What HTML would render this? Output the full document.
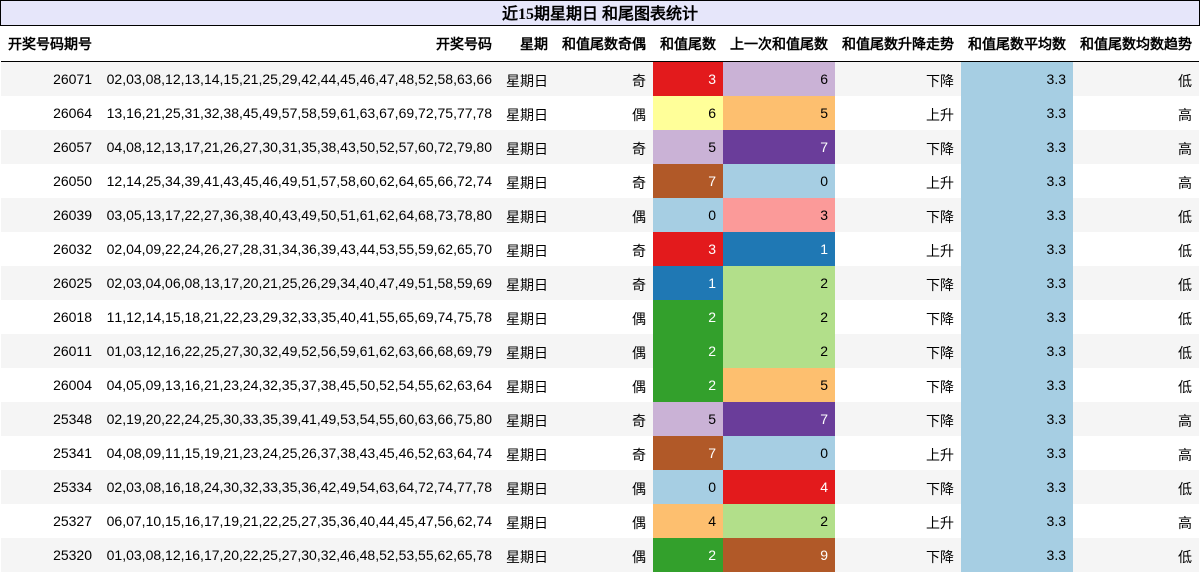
<!DOCTYPE html>
<html lang="zh"><head><meta charset="utf-8">
<style>
html,body{margin:0;padding:0;background:#fff;width:1200px;height:573px;overflow:hidden}
#t{position:absolute;left:0;top:0;width:1200px;height:26px;box-sizing:border-box;border:1px solid #000;background:#e6e6fa;text-align:center;font:bold 16px/28px "Liberation Serif","WenQuanYi Zen Hei",serif;color:#000}
table{position:absolute;left:1px;top:26px;width:1198px;table-layout:fixed;border-collapse:collapse;font:14px "Liberation Sans","WenQuanYi Zen Hei",sans-serif;color:#000;font-kerning:none}
th,td{padding:0 7px 0 0;text-align:right;white-space:nowrap;overflow:visible}
thead th{height:35px;border-bottom:1px solid #000;font-weight:bold}
tbody td{height:34px;box-sizing:border-box}
tbody td:nth-child(3),tbody td:nth-child(4),tbody td:nth-child(7),tbody td:nth-child(9){padding-top:4px}
tbody tr:nth-child(odd){background:#f5f5f5}
.m{background:#a6cee3}
.w{color:#fff}
.a{background:#a6cee3}.b{background:#1f78b4}.c{background:#33a02c}.d{background:#e31a1c}.e{background:#fdbf6f}.f{background:#cab2d6}.g{background:#ffff99}.h{background:#b15928}.i{background:#b2df8a}.j{background:#fb9a99}.k{background:#6a3d9a}
</style></head><body>
<div id="t">近15期星期日 和尾图表统计</div>
<table>
<colgroup><col style="width:98px"><col style="width:400px"><col style="width:56px"><col style="width:98px"><col style="width:70px"><col style="width:112px"><col style="width:126px"><col style="width:112px"><col style="width:126px"></colgroup>
<thead><tr><th>开奖号码期号</th><th>开奖号码</th><th>星期</th><th>和值尾数奇偶</th><th>和值尾数</th><th>上一次和值尾数</th><th>和值尾数升降走势</th><th>和值尾数平均数</th><th>和值尾数均数趋势</th></tr></thead>
<tbody>
<tr><td>26071</td><td>02,03,08,12,13,14,15,21,25,29,42,44,45,46,47,48,52,58,63,66</td><td>星期日</td><td>奇</td><td class="d w">3</td><td class="f">6</td><td>下降</td><td class="m">3.3</td><td>低</td></tr>
<tr><td>26064</td><td>13,16,21,25,31,32,38,45,49,57,58,59,61,63,67,69,72,75,77,78</td><td>星期日</td><td>偶</td><td class="g">6</td><td class="e">5</td><td>上升</td><td class="m">3.3</td><td>高</td></tr>
<tr><td>26057</td><td>04,08,12,13,17,21,26,27,30,31,35,38,43,50,52,57,60,72,79,80</td><td>星期日</td><td>奇</td><td class="f">5</td><td class="k w">7</td><td>下降</td><td class="m">3.3</td><td>高</td></tr>
<tr><td>26050</td><td>12,14,25,34,39,41,43,45,46,49,51,57,58,60,62,64,65,66,72,74</td><td>星期日</td><td>奇</td><td class="h w">7</td><td class="a">0</td><td>上升</td><td class="m">3.3</td><td>高</td></tr>
<tr><td>26039</td><td>03,05,13,17,22,27,36,38,40,43,49,50,51,61,62,64,68,73,78,80</td><td>星期日</td><td>偶</td><td class="a">0</td><td class="j">3</td><td>下降</td><td class="m">3.3</td><td>低</td></tr>
<tr><td>26032</td><td>02,04,09,22,24,26,27,28,31,34,36,39,43,44,53,55,59,62,65,70</td><td>星期日</td><td>奇</td><td class="d w">3</td><td class="b w">1</td><td>上升</td><td class="m">3.3</td><td>低</td></tr>
<tr><td>26025</td><td>02,03,04,06,08,13,17,20,21,25,26,29,34,40,47,49,51,58,59,69</td><td>星期日</td><td>奇</td><td class="b w">1</td><td class="i">2</td><td>下降</td><td class="m">3.3</td><td>低</td></tr>
<tr><td>26018</td><td>11,12,14,15,18,21,22,23,29,32,33,35,40,41,55,65,69,74,75,78</td><td>星期日</td><td>偶</td><td class="c w">2</td><td class="i">2</td><td>下降</td><td class="m">3.3</td><td>低</td></tr>
<tr><td>26011</td><td>01,03,12,16,22,25,27,30,32,49,52,56,59,61,62,63,66,68,69,79</td><td>星期日</td><td>偶</td><td class="c w">2</td><td class="i">2</td><td>下降</td><td class="m">3.3</td><td>低</td></tr>
<tr><td>26004</td><td>04,05,09,13,16,21,23,24,32,35,37,38,45,50,52,54,55,62,63,64</td><td>星期日</td><td>偶</td><td class="c w">2</td><td class="e">5</td><td>下降</td><td class="m">3.3</td><td>低</td></tr>
<tr><td>25348</td><td>02,19,20,22,24,25,30,33,35,39,41,49,53,54,55,60,63,66,75,80</td><td>星期日</td><td>奇</td><td class="f">5</td><td class="k w">7</td><td>下降</td><td class="m">3.3</td><td>高</td></tr>
<tr><td>25341</td><td>04,08,09,11,15,19,21,23,24,25,26,37,38,43,45,46,52,63,64,74</td><td>星期日</td><td>奇</td><td class="h w">7</td><td class="a">0</td><td>上升</td><td class="m">3.3</td><td>高</td></tr>
<tr><td>25334</td><td>02,03,08,16,18,24,30,32,33,35,36,42,49,54,63,64,72,74,77,78</td><td>星期日</td><td>偶</td><td class="a">0</td><td class="d w">4</td><td>下降</td><td class="m">3.3</td><td>低</td></tr>
<tr><td>25327</td><td>06,07,10,15,16,17,19,21,22,25,27,35,36,40,44,45,47,56,62,74</td><td>星期日</td><td>偶</td><td class="e">4</td><td class="i">2</td><td>上升</td><td class="m">3.3</td><td>高</td></tr>
<tr><td>25320</td><td>01,03,08,12,16,17,20,22,25,27,30,32,46,48,52,53,55,62,65,78</td><td>星期日</td><td>偶</td><td class="c w">2</td><td class="h w">9</td><td>下降</td><td class="m">3.3</td><td>低</td></tr>
</tbody></table>
</body></html>
